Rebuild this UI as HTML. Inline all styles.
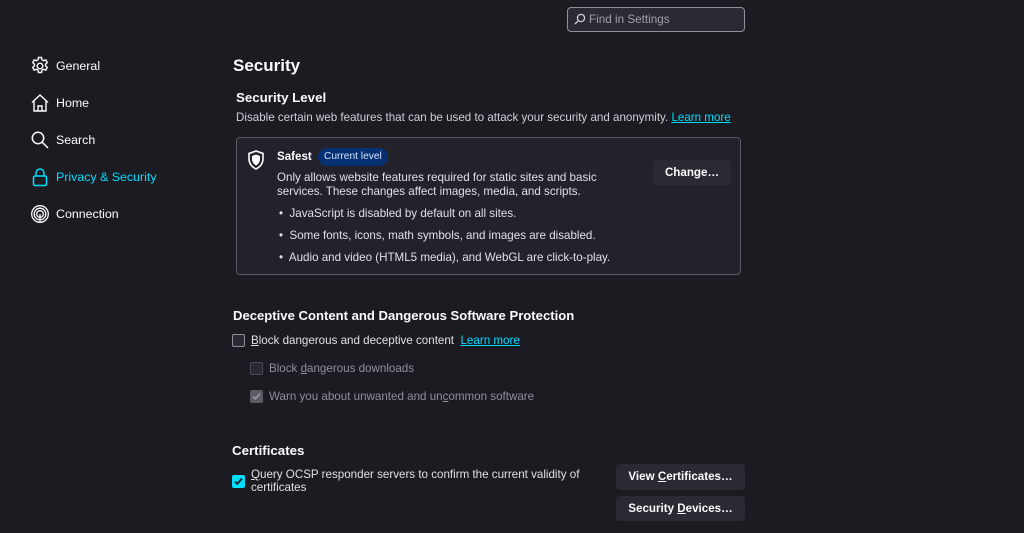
<!DOCTYPE html>
<html><head><meta charset="utf-8"><style>
*{margin:0;padding:0;box-sizing:border-box}
body{width:1024px;height:533px;background:#1c1b22;color:#fbfbfe;font-family:"Liberation Sans",sans-serif;position:relative;overflow:hidden;font-size:11.6px}
.a{position:absolute;white-space:nowrap}
.nav{font-size:12.4px;color:#fbfbfe}
.nav svg{position:absolute;left:-26px;top:-3px}
.teal{color:#00ddff}
.link{color:#00ddff;text-decoration:underline}
.btn{position:absolute;background:#2b2a33;border-radius:4px;font-weight:bold;font-size:11.6px;text-align:center;color:#fbfbfe}
.cb{position:absolute;width:13px;height:13px;border:1px solid #8f8f9d;border-radius:2px;background:#2b2a33}
.dim{color:#8f8f9d}
u{text-decoration:underline}
</style></head><body>
<div class="a" style="left:567px;top:7px;width:178px;height:25px;border:1px solid #8f8f9d;border-radius:4px;background:#2b2a33"></div>
<svg class="a" style="left:574px;top:13px" width="12" height="12" viewBox="0 0 12 12" fill="none" stroke="#cfcfd8" stroke-width="1.3"><circle cx="7" cy="5" r="3.6"/><path d="M4.4 7.6L1 11"/></svg>
<div class="a" style="left:589px;top:13px;color:#a0a0ab;font-size:11.7px">Find in Settings</div>

<div class="a nav" style="left:56px;top:59px">General<svg width="20" height="20" viewBox="0 0 20 20" fill="none" stroke="#fbfbfe" stroke-width="1.4"><path d="M8.5 1.5h3l.5 2.3 1.6.9 2.2-.8 1.5 2.6-1.7 1.6v1.8l1.7 1.6-1.5 2.6-2.2-.8-1.6.9-.5 2.3h-3l-.5-2.3-1.6-.9-2.2.8-1.5-2.6 1.7-1.6V8.1L2.7 6.5 4.2 3.9l2.2.8 1.6-.9z"/><circle cx="10" cy="10" r="2.8"/></svg></div>
<div class="a nav" style="left:56px;top:96px">Home<svg width="20" height="20" viewBox="0 0 20 20" fill="none" stroke="#fbfbfe" stroke-width="1.4"><path d="M2 9.5L10 2l8 7.5M4 8v10h12V8M8 18v-5h4v5"/></svg></div>
<div class="a nav" style="left:56px;top:133px">Search<svg width="20" height="20" viewBox="0 0 20 20" fill="none" stroke="#fbfbfe" stroke-width="1.5"><circle cx="8" cy="8" r="5.7"/><path d="M12.2 12.2L18 18"/></svg></div>
<div class="a nav teal" style="left:56px;top:170px">Privacy &amp; Security<svg width="20" height="20" viewBox="0 0 20 20" fill="none" stroke="#00ddff" stroke-width="1.5"><path d="M6 9V6a4 4 0 0 1 8 0v3"/><rect x="3.5" y="9" width="13" height="9.5" rx="1.5"/></svg></div>
<div class="a nav" style="left:56px;top:207px">Connection<svg width="20" height="20" viewBox="0 0 20 20" fill="none" stroke="#fbfbfe" stroke-width="1.3"><circle cx="10" cy="10" r="8.3"/><circle cx="10" cy="10" r="5.8"/><circle cx="10" cy="10" r="3.3"/><path d="M10 10v8.5"/></svg></div>

<div class="a" style="left:233px;top:56px;font-size:17px;font-weight:bold">Security</div>
<div class="a" style="left:236px;top:90px;font-size:13.3px;font-weight:bold">Security Level</div>
<div class="a" style="left:236px;top:111px;font-size:11.6px;color:#cfcfd8">Disable certain web features that can be used to attack your security and anonymity. <span class="link">Learn more</span></div>

<div class="a" style="left:236px;top:137px;width:505px;height:138px;border:1px solid #5b5b66;border-radius:4px;background:#23222b"></div>
<svg class="a" style="left:247px;top:150px" width="18" height="20" viewBox="0 0 18 20"><path d="M9 1L2 3.5v5c0 5 3 8.5 7 10.5 4-2 7-5.5 7-10.5v-5z" fill="none" stroke="#fbfbfe" stroke-width="1.6"/><path d="M9 4.5L5 6v3c0 3 1.8 5.2 4 6.5 2.2-1.3 4-3.5 4-6.5V6z" fill="#fbfbfe"/></svg>
<div class="a" style="left:277px;top:150px;font-weight:bold;font-size:11.6px">Safest</div>
<div class="a" style="left:318px;top:148px;height:18px;padding:0 6px;border-radius:9px;background:#073072;color:#cfe3ff;font-size:10.2px;line-height:18px">Current level</div>
<div class="a" style="left:277px;top:171px;font-size:11.6px;line-height:14px;color:#e0e0e6">Only allows website features required for static sites and basic<br>services. These changes affect images, media, and scripts.</div>
<div class="a" style="left:279px;top:207px;font-size:11.6px;color:#e0e0e6">•&nbsp; JavaScript is disabled by default on all sites.</div>
<div class="a" style="left:279px;top:229px;font-size:11.6px;color:#e0e0e6">•&nbsp; Some fonts, icons, math symbols, and images are disabled.</div>
<div class="a" style="left:279px;top:251px;font-size:11.6px;color:#e0e0e6">•&nbsp; Audio and video (HTML5 media), and WebGL are click-to-play.</div>
<div class="btn" style="left:653px;top:160px;width:78px;height:25px;line-height:25px">Change…</div>

<div class="a" style="left:233px;top:308px;font-size:13.1px;font-weight:bold">Deceptive Content and Dangerous Software Protection</div>
<div class="cb" style="left:232px;top:334px"></div>
<div class="a" style="left:251px;top:334px;font-size:11.6px;color:#e0e0e6"><u>B</u>lock dangerous and deceptive content&nbsp; <span class="link">Learn more</span></div>
<div class="cb" style="left:250px;top:362px;border-color:#4a4a55"></div>
<div class="a dim" style="left:269px;top:362px;font-size:11.6px">Block <u>d</u>angerous downloads</div>
<div class="cb" style="left:250px;top:390px;background:#5b5b66;border-color:#5b5b66"><svg width="11" height="11" viewBox="0 0 11 11" style="position:absolute;left:0;top:0"><path d="M2 5.5l2.3 2.3L9 2.5" fill="none" stroke="#9a9aa5" stroke-width="1.6"/></svg></div>
<div class="a dim" style="left:269px;top:390px;font-size:11.6px">Warn you about unwanted and un<u>c</u>ommon software</div>

<div class="a" style="left:232px;top:443px;font-size:13.3px;font-weight:bold">Certificates</div>
<div class="cb" style="left:232px;top:475px;background:#00ddff;border-color:#00ddff"><svg width="11" height="11" viewBox="0 0 11 11" style="position:absolute;left:0;top:0"><path d="M2 5.5l2.3 2.3L9 2.5" fill="none" stroke="#1c1b22" stroke-width="1.8"/></svg></div>
<div class="a" style="left:251px;top:468px;font-size:11.6px;line-height:13px;color:#e0e0e6"><u>Q</u>uery OCSP responder servers to confirm the current validity of<br>certificates</div>
<div class="btn" style="left:616px;top:464px;width:129px;height:26px;line-height:26px">View <u>C</u>ertificates…</div>
<div class="btn" style="left:616px;top:496px;width:129px;height:25px;line-height:25px">Security <u>D</u>evices…</div>
</body></html>
